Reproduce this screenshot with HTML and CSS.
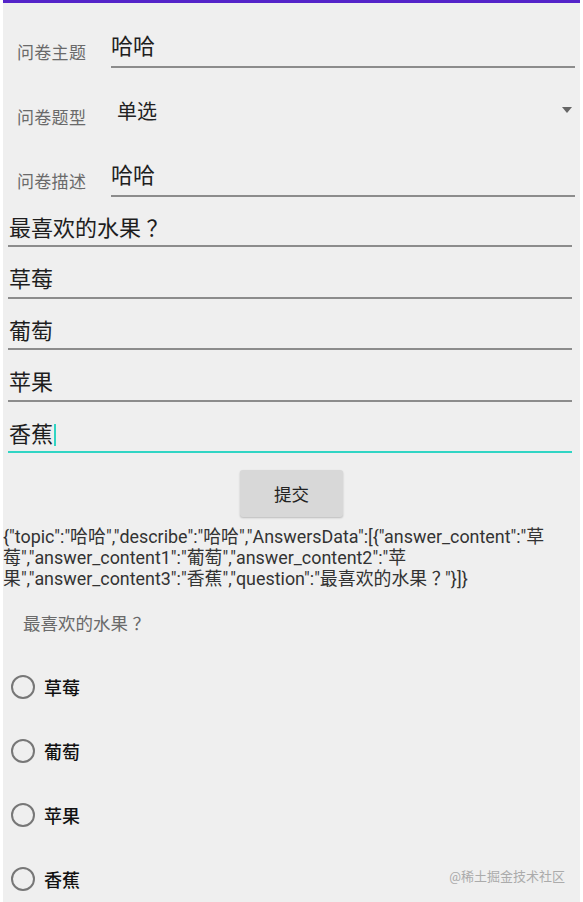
FILE: index.html
```html
<!DOCTYPE html>
<html lang="zh-CN">
<head>
  <meta charset="UTF-8">
  <meta name="viewport" content="width=device-width, initial-scale=1.0">
  <title>问卷</title>
  <link rel="stylesheet" href="styles.css">
</head>
<body>
  <div class="screen">
    <div class="field-row row-topic">
      <span class="field-label">问卷主题</span>
      <div class="field-input">哈哈</div>
    </div>

    <div class="field-row row-type">
      <span class="field-label">问卷题型</span>
      <div class="spinner">
        <span class="spinner-text">单选</span>
        <span class="spinner-arrow"></span>
      </div>
    </div>

    <div class="field-row row-desc">
      <span class="field-label">问卷描述</span>
      <div class="field-input">哈哈</div>
    </div>

    <div class="answers">
      <div class="answer-input">最喜欢的水果<span class="fw">？</span></div>
      <div class="answer-input">草莓</div>
      <div class="answer-input">葡萄</div>
      <div class="answer-input">苹果</div>
      <div class="answer-input focused">香蕉<span class="cursor"></span></div>
    </div>

    <div class="btn-wrap">
      <button class="submit-btn">提交</button>
    </div>

    <div class="json-output">
      <span class="json-line">{"topic":"哈哈","describe":"哈哈","AnswersData":[{"answer_content":"草</span>
      <span class="json-line">莓","answer_content1":"葡萄","answer_content2":"苹</span>
      <span class="json-line">果","answer_content3":"香蕉","question":"最喜欢的水果<span class="fw">？</span>"}]}</span>
    </div>

    <div class="question-title">最喜欢的水果<span class="fw">？</span></div>

    <div class="radio-group">
      <label class="radio-item"><span class="radio-circle"></span>草莓</label>
      <label class="radio-item"><span class="radio-circle"></span>葡萄</label>
      <label class="radio-item"><span class="radio-circle"></span>苹果</label>
      <label class="radio-item"><span class="radio-circle"></span>香蕉</label>
    </div>

    <div class="watermark">@稀土掘金技术社区</div>
  </div>
</body>
</html>
```

FILE: styles.css
```css
body {
  margin: 0;
  padding: 0;
  background-color: #fff;
  font-family: Roboto, "Noto Sans CJK SC", sans-serif;
}
.screen {
  position: relative;
  margin: 0 3px;
  height: 899px;
  background-color: #efefef;
  border-top: 3px solid #5424c9;
  overflow: hidden;
}
/* full-width question mark, centred in its cell */
.fw {
  display: inline-block;
  width: 1em;
  text-align: center;
  font-feature-settings: "halt";
}

/* top form */
.field-row {
  display: flex;
  align-items: center;
  margin-left: 14px;
  margin-right: 5px;
}
.field-label {
  width: 94px;
  flex: none;
  font-size: 17px;
  letter-spacing: 0.3px;
  color: #6a6a6a;
  padding-top: 5px;
}
.field-input {
  flex: 1;
  height: 38px;
  line-height: 34px;
  padding-bottom: 2px;
  box-sizing: border-box;
  border-bottom: 2px solid #8c8c8c;
  font-size: 22px;
  color: #1e1e1e;
}
.row-topic {
  margin-top: 27px;
}
.row-type {
  margin-top: 23px;
  height: 40px;
}
.row-type .field-label {
  padding-top: 11px;
}
.row-desc {
  margin-top: 28px;
}
.spinner {
  flex: 1;
  display: flex;
  align-items: center;
  justify-content: space-between;
  padding-left: 6px;
  padding-right: 3px;
  margin-top: -2px;
}
.spinner-text {
  font-size: 20px;
  color: #222;
}
.spinner-arrow {
  width: 0;
  height: 0;
  border-left: 5px solid transparent;
  border-right: 5px solid transparent;
  border-top: 6px solid #666;
}

/* answer inputs */
.answers {
  margin: -1px 8px 0 5px;
}
.answer-input {
  height: 51.4px;
  box-sizing: border-box;
  padding-top: 19px;
  padding-left: 1px;
  line-height: 28px;
  font-size: 22px;
  color: #1e1e1e;
  border-bottom: 2px solid #8c8c8c;
}
.answer-input.focused {
  border-bottom-color: #30d5c4;
}
.cursor {
  display: inline-block;
  width: 2px;
  height: 22px;
  margin-left: 1px;
  vertical-align: -4px;
  background-color: #30d5c4;
}

/* submit */
.btn-wrap {
  display: flex;
  justify-content: center;
  margin-top: 17px;
}
.submit-btn {
  width: 103px;
  height: 47px;
  border: none;
  border-radius: 3px;
  background-color: #d8d8d8;
  box-shadow: 0 1px 2px rgba(0, 0, 0, 0.22);
  font-family: Roboto, "Noto Sans CJK SC", sans-serif;
  font-size: 17.5px;
  color: #222;
}

.json-output {
  margin-top: 9px;
  font-size: 17.9px;
  line-height: 21px;
  color: #333;
}
.json-line {
  display: block;
  white-space: nowrap;
}

.question-title {
  margin-top: 21px;
  padding-left: 20px;
  font-size: 17.5px;
  color: #6a6a6a;
}

/* radios */
.radio-group {
  margin-top: 20px;
}
.radio-item {
  display: flex;
  align-items: center;
  height: 64px;
  padding-left: 8px;
  font-size: 18px;
  font-weight: 500;
  color: #111;
}
.radio-circle {
  width: 20px;
  height: 20px;
  border: 2px solid #777;
  border-radius: 50%;
  margin-right: 9px;
}

.watermark {
  position: absolute;
  right: 15px;
  bottom: 17px;
  font-size: 13px;
  color: #ababab;
}
```
